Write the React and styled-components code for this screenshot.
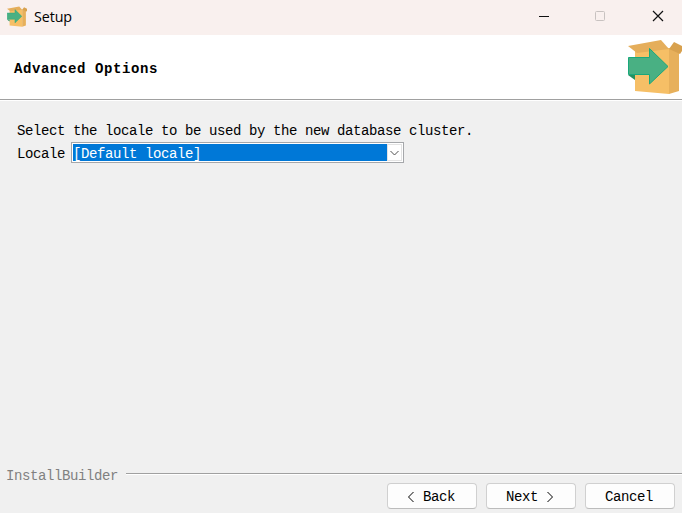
import React from "react";
import styled, { createGlobalStyle } from "styled-components";

const GlobalStyle = createGlobalStyle`
  *, *::before, *::after { box-sizing: border-box; }
  body { margin: 0; background: #f0f0f0; overflow: hidden; }
`;

const Window = styled.div`
  display: flex;
  flex-direction: column;
  width: 682px;
  height: 513px;
  background: #f0f0f0;
  color: #000;
  font-family: "Liberation Mono", monospace;
  font-size: 14px;
  letter-spacing: -0.402px;
  line-height: 16px;
  white-space: pre;
`;

const TitleBar = styled.header`
  display: flex;
  align-items: center;
  flex: none;
  height: 35px;
  padding: 0 0 2px 7px;
  background: #f9f0ee;
`;

const Title = styled.span`
  flex: 1;
  margin: 1px 0 0 7px;
  font-family: "Open Sans", "Noto Sans", sans-serif;
  font-size: 14.3px;
  letter-spacing: -0.1px;
  line-height: 20px;
`;

const WindowControl = styled.button`
  display: grid;
  place-items: center;
  width: 57px;
  height: 33px;
  padding: 0 0 1px;
  border: 0;
  background: none;
  color: ${({ $disabled }) => ($disabled ? "#c8c2c0" : "#111")};
`;

const Controls = styled.div`
  display: flex;
  margin-right: -4px;
`;

const Banner = styled.section`
  display: flex;
  align-items: flex-start;
  justify-content: space-between;
  flex: none;
  height: 66px;
  padding: 4px 0 0 14px;
  background: #fff;
  border-bottom: 1px solid #fff;
  box-shadow: inset 0 -1px #a0a0a0;
`;

const Heading = styled.h1`
  margin: 22px 0 0;
  font-size: 14px;
  font-weight: 700;
  letter-spacing: 0.598px;
  line-height: 16px;
`;

const Content = styled.main`
  flex: 1;
  padding: 21px 17px 0;
`;

const Prompt = styled.p`
  margin: 0;
  line-height: 18px;
`;

const Field = styled.label`
  display: flex;
  align-items: center;
  gap: 6px;
  margin-top: 2px;
`;

const FieldName = styled.span`
  padding-top: 2px;
`;

const Combo = styled.div`
  display: flex;
  width: 333px;
  height: 21px;
  padding: 1px;
  border: 1px solid #a5a7aa;
  background: #fff;
`;

const Selection = styled.span`
  flex: 1;
  height: 17px;
  background: #0078d7;
  color: #fff;
  line-height: 20px;
`;

const DropArrow = styled.span`
  display: grid;
  place-items: center;
  width: 15px;
  border: 1px solid #e3e3e3;
`;

const Divider = styled.div`
  display: flex;
  align-items: center;
  flex: none;
  gap: 8px;
  height: 16px;
  padding-left: 6px;
  color: #808080;
`;

const Rule = styled.span`
  flex: 1;
  height: 2px;
  margin-top: -4px;
  background: #fff;
  border-top: 1px solid #a0a0a0;
`;

const Actions = styled.footer`
  display: flex;
  align-items: flex-start;
  justify-content: flex-end;
  flex: none;
  gap: 9px;
  height: 29px;
  padding-right: 7px;
`;

const Button = styled.button`
  width: 90px;
  height: 26px;
  margin-top: -1px;
  padding: 2px 2px 0 0;
  border: 1px solid #d0d0d0;
  border-bottom-color: #bcbcbc;
  border-radius: 4px;
  background: #fdfdfd;
  color: #000;
  font: inherit;
  letter-spacing: inherit;
  white-space: pre;
`;

const Angle = styled.svg`
  display: inline-block;
  width: 8px;
  height: 12px;
  vertical-align: -2px;
`;

function BoxLogo({ width, height }) {
  return (
    <svg width={width} height={height} viewBox="0 0 54 56" preserveAspectRatio="none" aria-hidden="true">
      <path d="M7 12 41 9V55L7 52Z" fill="#f6bf66" />
      <path d="M41 9 51 13V52L41 55Z" fill="#e7b05b" />
      <path d="M0 7 33 1 41 10 9 14Z" fill="#e5ae5b" />
      <path d="M41 10 46 3 54 7V12L52 15Z" fill="#d8a14e" />
      <path d="M0 36H7V41Z" fill="#25905f" />
      <path d="M.5 18.5H21.5V9.5L40 27.5 21.5 45V35.5H.5Z" fill="#49b083" stroke="#19a87c" />
    </svg>
  );
}

function Chevron({ right }) {
  return (
    <Angle viewBox="0 0 8 12" role="img" aria-label={right ? ">" : "<"}>
      <path d={right ? "M1.5 1 6.5 6 1.5 11" : "M6.5 1 1.5 6 6.5 11"} fill="none" stroke="#000" />
    </Angle>
  );
}

export default function App() {
  return (
    <Window>
      <GlobalStyle />
      <TitleBar>
        <BoxLogo width={20} height={21} />
        <Title>Setup</Title>
        <Controls>
          <WindowControl aria-label="Minimize">
            <svg width="12" height="12" shapeRendering="crispEdges"><path d="M1 6.5H11" stroke="currentColor" /></svg>
          </WindowControl>
          <WindowControl aria-label="Maximize" $disabled>
            <svg width="12" height="12"><rect x=".5" y="1.5" width="9" height="9" rx="1" fill="none" stroke="currentColor" /></svg>
          </WindowControl>
          <WindowControl aria-label="Close">
            <svg width="12" height="12"><path d="M1 1 11 11M11 1 1 11" stroke="currentColor" strokeWidth="1.2" /></svg>
          </WindowControl>
        </Controls>
      </TitleBar>
      <Banner>
        <Heading>Advanced Options</Heading>
        <BoxLogo width={54} height={56} />
      </Banner>
      <Content>
        <Prompt>Select the locale to be used by the new database cluster.</Prompt>
        <Field>
          <FieldName>Locale</FieldName>
          <Combo>
            <Selection>[Default locale]</Selection>
            <DropArrow>
              <svg width="9" height="6"><path d="M.5 1 4.5 5 8.5 1" fill="none" stroke="#505050" /></svg>
            </DropArrow>
          </Combo>
        </Field>
      </Content>
      <Divider>
        <span>InstallBuilder</span>
        <Rule />
      </Divider>
      <Actions>
        <Button><Chevron /> Back</Button>
        <Button>Next <Chevron right /></Button>
        <Button>Cancel</Button>
      </Actions>
    </Window>
  );
}
